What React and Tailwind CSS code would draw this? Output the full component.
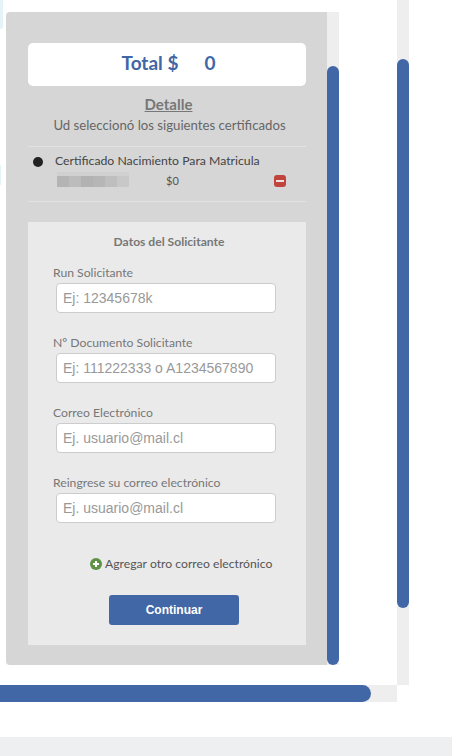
import React from 'react'

const sans = "font-['Lato','Noto_Sans',sans-serif]"

function Field({ label, placeholder }) {
  return (
    <div className="h-[70px]">
      <div className="text-[12.2px] leading-[15px] h-[16px] text-[#777] pl-[25px]">{label}</div>
      <input
        type="text"
        placeholder={placeholder}
        className="block mt-[2px] ml-[28px] w-[220px] h-[30px] bg-white border border-[#ccc] rounded-[4px] px-[6px] text-[14px] font-['Liberation_Sans',sans-serif] placeholder:text-[#999] placeholder:opacity-100"
      />
    </div>
  )
}

function Blurred() {
  const shades = ['bg-[#b4b4b4]', 'bg-[#bcbcbc]', 'bg-[#b2b2b2]', 'bg-[#b6b6b6]', 'bg-[#bebebe]', 'bg-[#c8c8c8]']
  return (
    <div className="w-[72px]">
      <div className="h-[4px] w-[72px] bg-[#d0d0d0]"></div>
      <div className="flex h-[11px]">
        {shades.map((s, i) => <div key={i} className={`w-[12px] ${s}`}></div>)}
      </div>
    </div>
  )
}

export default function App() {
  return (
    <div className={`relative w-[452px] h-[756px] overflow-hidden bg-white ${sans}`}>
      <div className="absolute left-0 top-0 w-[3px] h-[29px] bg-[#e3f3f8] rounded-br-[3px]"></div>
      <div className="absolute left-0 top-[165px] w-[1px] h-[20px] bg-[#e3f3f8]"></div>

      <div className="flex h-[685px]">
        <div className="w-[397px] pt-3 pl-1.5 flex items-start">
          <div className="w-[321px] h-[653px] bg-[#d6d6d6] rounded-l-[4px] pl-[22px] pr-[21px] pt-[31px]">
            <div className="h-[43px] bg-white rounded-[5px] flex items-center justify-center text-[19px] font-bold text-[#3f67a6] pb-[2px] pl-[3px]">
              <span>Total $</span>
              <span className="ml-[26px]">0</span>
            </div>
            <div className="text-center pl-[3px] mt-[8px] text-[15px] leading-[20px] font-bold text-[#777] underline">Detalle</div>
            <div className="text-center pl-[5px] mt-[1px] text-[13.2px] leading-[20px] text-[#666]">Ud seleccionó los siguientes certificados</div>

            <div className="mt-[11px] h-[56px] border-y border-[#e2e2e2]">
              <div className="flex items-center pt-[6px]">
                <div className="w-[10px] h-[10px] rounded-full bg-[#222] ml-[5px] mt-[2px]"></div>
                <div className="ml-[12px] text-[12.25px] leading-[16px] text-[#444]">Certificado Nacimiento Para Matricula</div>
              </div>
              <div className="flex items-center mt-[3px] h-[15px]">
                <div className="ml-[29px]"><Blurred /></div>
                <div className="ml-[37px] pt-[3px] text-[11px] text-[#555]">$0</div>
                <div className="ml-auto mr-[20px] mt-[2px] w-[12px] h-[12px] rounded-[3px] bg-[#c0443c] flex items-center justify-center">
                  <div className="w-[8px] h-[2px] bg-[#f0e0e0]"></div>
                </div>
              </div>
            </div>

            <div className="mt-[20px] h-[423px] bg-[#eaeaea] pt-[12px]">
              <div className="text-center pl-[4px] text-[12.1px] leading-[15px] font-bold text-[#777] mb-[16px]">Datos del Solicitante</div>
              <Field label="Run Solicitante" placeholder="Ej: 12345678k" />
              <Field label="Nº Documento Solicitante" placeholder="Ej: 111222333 o A1234567890" />
              <Field label="Correo Electrónico" placeholder="Ej. usuario@mail.cl" />
              <Field label="Reingrese su correo electrónico" placeholder="Ej. usuario@mail.cl" />
              <div className="flex items-center mt-[11px] ml-[62px] h-[16px] text-[12.2px] text-[#555]">
                <svg width="12" height="12" viewBox="0 0 12 12" className="mr-[3px]">
                  <circle cx="6" cy="6" r="6" fill="#5f9147" />
                  <path d="M6 3v6M3 6h6" stroke="#fff" strokeWidth="2" />
                </svg>
                Agregar otro correo electrónico
              </div>
              <button className="block mt-[23px] ml-[81px] w-[130px] h-[30px] bg-[#4267a6] rounded-[3px] text-white text-[12px] font-bold font-['Liberation_Sans',sans-serif]">Continuar</button>
            </div>
          </div>
          <div className="w-3 h-[653px] bg-[#eeeeee] pt-[54px]">
            <div className="h-[599px] bg-[#4267a6] rounded-full"></div>
          </div>
        </div>
        <div className="w-3 h-[685px] bg-[#eeeeee] pt-[59px]">
          <div className="h-[549px] bg-[#4267a6] rounded-full"></div>
        </div>
      </div>

      <div className="w-[397px] h-[17px] bg-[#eeeeee]">
        <div className="w-[371px] h-full bg-[#4267a6] rounded-r-full"></div>
      </div>
      <div className="mt-[35px] h-[19px] bg-[#eeeff1]"></div>
    </div>
  )
}
